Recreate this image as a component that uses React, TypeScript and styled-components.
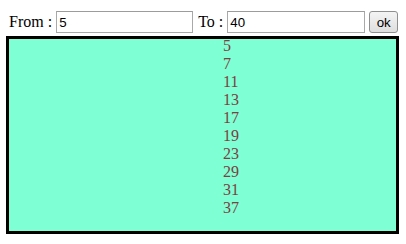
import React, { useState } from "react";
import styled, { createGlobalStyle } from "styled-components";

const GlobalStyle = createGlobalStyle`
  html, body {
    margin: 0;
    padding: 0;
    background: #fff;
  }
  body {
    font-family: "Liberation Serif", "Times New Roman", serif;
    font-size: 16px;
  }
`;

const Page = styled.div`
  display: flex;
  flex-direction: column;
  width: 406px;
  padding: 11px 0 0 6px;
  box-sizing: border-box;
`;

const Toolbar = styled.form`
  display: flex;
  align-items: center;
  height: 22px;
  margin: 0;
`;

const Label = styled.label<{ $left: number }>`
  display: flex;
  align-items: center;
  height: 22px;
  padding-left: ${p => p.$left}px;
  font-size: 16px;
  color: #000;
  white-space: pre;
`;

const Field = styled.input<{ $width: number }>`
  width: ${p => p.$width}px;
  height: 22px;
  box-sizing: border-box;
  margin: 0;
  padding: 1px 2px;
  border: 1px solid #a9a9a9;
  border-top-color: #9c9c9c;
  font-family: "Liberation Sans", Arial, sans-serif;
  font-size: 13.3px;
  color: #000;
  outline: none;
`;

const OkButton = styled.button`
  width: 29px;
  height: 22px;
  margin-left: 4px;
  padding: 0;
  box-sizing: border-box;
  border: 1px solid #8f8f8f;
  border-radius: 3px;
  background: linear-gradient(#f4f4f4, #dedede);
  font-family: "Liberation Sans", Arial, sans-serif;
  font-size: 13.3px;
  color: #000;
`;

const Result = styled.div`
  width: 393px;
  height: 198px;
  margin-top: 3px;
  box-sizing: border-box;
  border: 3px solid #000;
  background: #7fffd4;
  padding: 0 0 0 214px;
  overflow: hidden;
`;

const NumberList = styled.div`
  display: flex;
  flex-direction: column;
  margin-top: -2px;
`;

const Num = styled.span`
  font-size: 16px;
  line-height: 18px;
  color: #7a4141;
`;

const primesBetween = (from: number, to: number) => {
  const out: number[] = [];
  for (let n = Math.max(2, from); n < to; n++) {
    let ok = true;
    for (let d = 2; d * d <= n; d++) {
      if (n % d === 0) { ok = false; break; }
    }
    if (ok) out.push(n);
  }
  return out;
};

export default function App() {
  const [from, setFrom] = useState("5");
  const [to, setTo] = useState("40");
  const primes = primesBetween(Number(from), Number(to));

  return (
    <Page>
      <GlobalStyle />
      <Toolbar onSubmit={e => e.preventDefault()}>
        <Label $left={3}>From : </Label>
        <Field $width={137} value={from} onChange={e => setFrom(e.target.value)} />
        <Label $left={5}>To : </Label>
        <Field $width={138} value={to} onChange={e => setTo(e.target.value)} />
        <OkButton type="submit">ok</OkButton>
      </Toolbar>
      <Result>
        <NumberList>
          {primes.map(p => (
            <Num key={p}>{p}</Num>
          ))}
        </NumberList>
      </Result>
    </Page>
  );
}
